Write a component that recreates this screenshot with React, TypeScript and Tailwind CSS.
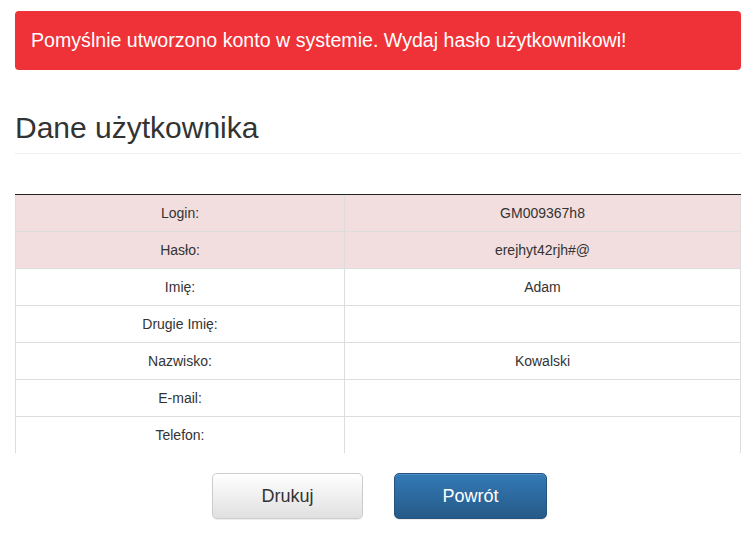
import React from 'react';

const rows: { label: string; value: string; highlight?: boolean }[] = [
  { label: 'Login:', value: 'GM009367h8', highlight: true },
  { label: 'Hasło:', value: 'erejhyt42rjh#@', highlight: true },
  { label: 'Imię:', value: 'Adam' },
  { label: 'Drugie Imię:', value: '' },
  { label: 'Nazwisko:', value: 'Kowalski' },
  { label: 'E-mail:', value: '' },
  { label: 'Telefon:', value: '' },
];

export default function App() {
  return (
    <div className="min-h-screen bg-white px-[15px] text-[#333] font-['Liberation_Sans',Arial,sans-serif]">
      {/* success/warning alert */}
      <div className="mt-[11px] flex h-[59px] items-center rounded-[4px] bg-[#ee3237] px-4 text-[19.6px] text-white">
        Pomyślnie utworzono konto w systemie. Wydaj hasło użytkownikowi!
      </div>

      <div className="mt-[41px] border-b border-[#eee] pb-[9px]">
        <h1 className="text-[30px] leading-[33px] font-normal text-[#333]">Dane użytkownika</h1>
      </div>

      {/* scrollable user data table */}
      <div className="mt-[40px] h-[259px] overflow-hidden border-t border-[#222]">
        <table className="w-full table-fixed border-collapse text-[14px] leading-[20px]">
          <colgroup>
            <col className="w-[329px]" />
            <col />
          </colgroup>
          <tbody>
            {rows.map((r) => (
              <tr key={r.label} className={r.highlight ? 'bg-[#f2dede]' : 'bg-white'}>
                <td className="border-x border-b border-[#ddd] px-2 py-2 text-center">{r.label}</td>
                <td className="border-x border-b border-[#ddd] px-2 py-2 text-center">{r.value || '\u00a0'}</td>
              </tr>
            ))}
          </tbody>
        </table>
      </div>

      <div className="mt-[20px] flex justify-center gap-[31px] pl-[3px]">
        <button
          type="button"
          className="h-[46px] w-[151px] rounded-[5px] border border-[#ccc] bg-gradient-to-b from-white to-[#e0e0e0] text-[18px] text-[#333] shadow-[inset_0_1px_0_rgba(255,255,255,0.15),0_1px_1px_rgba(0,0,0,0.075)]"
        >
          Drukuj
        </button>
        <button
          type="button"
          className="h-[46px] w-[153px] rounded-[5px] border border-[#245580] bg-gradient-to-b from-[#337ab7] to-[#265a88] text-[18px] text-white shadow-[inset_0_1px_0_rgba(255,255,255,0.15),0_1px_1px_rgba(0,0,0,0.075)]"
        >
          Powrót
        </button>
      </div>
    </div>
  );
}
